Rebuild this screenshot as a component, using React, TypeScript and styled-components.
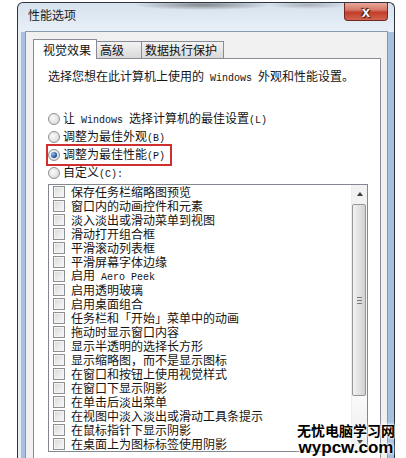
import React from 'react'
import styled, { createGlobalStyle } from 'styled-components'

const GlobalStyle = createGlobalStyle`
  html, body {
    margin: 0;
    padding: 0;
    background: #fff;
  }
  body {
    width: 406px;
    height: 458px;
    overflow: hidden;
    font-family: "Noto Sans CJK SC", "Liberation Sans", sans-serif;
    font-size: 12px;
    color: #141414;
  }
`

const Page = styled.div`
  position: relative;
  width: 406px;
  height: 458px;
  padding: 2px 11px 0 17px;
  box-sizing: border-box;
  overflow: hidden;
`

const Window = styled.div`
  border: 1px solid #2c3540;
  border-bottom: none;
  border-radius: 6px 6px 0 0;
  padding: 0 6px 0 7px;
  height: 470px;
  background:
    radial-gradient(ellipse 70px 5px at 185px 2px, rgba(60, 60, 60, 0.55), transparent),
    radial-gradient(ellipse 40px 4px at 290px 2px, rgba(80, 80, 80, 0.35), transparent),
    linear-gradient(180deg, #d6e2ee 0, #e8eff7 28px) 0 0 / 100% 29px no-repeat,
    linear-gradient(90deg, #e7eef5 0 3px, #a5c1df 3px 7px, #c9d9ea 7px calc(100% - 6px), #a5c1df calc(100% - 6px));
`

const TitleBar = styled.div`
  display: flex;
  align-items: flex-start;
  justify-content: space-between;
  height: 28px;
`

const Title = styled.div`
  margin: 5px 0 0 3px;
  line-height: 14px;
  color: #1b1b1b;
`

const CloseButton = styled.div`
  width: 44px;
  height: 18px;
  box-sizing: border-box;
  border: 1px solid #6e2a22;
  border-top: none;
  border-radius: 0 0 4px 4px;
  background: linear-gradient(180deg, #e8a698 0, #d67a69 40%, #c13e2c 55%, #d1634e 100%);
  display: flex;
  align-items: center;
  justify-content: center;
  color: #fff;
  font-family: "Liberation Sans", sans-serif;
  font-weight: bold;
  font-size: 15px;
  line-height: 1;
  text-shadow: 0 0 1px #4a140e, 1px 1px 1px #4a140e, -1px -1px 1px #4a140e;
`

const Client = styled.div`
  border: 1px solid #8799ae;
  border-bottom: none;
  background: #f0f0f0;
  padding: 6px 6px 6px 7px;
  height: 440px;
`

const TabStrip = styled.div`
  display: flex;
  align-items: flex-end;
  height: 20px;
`

const Tab = styled.div<{ $active?: boolean; $w: number }>`
  width: ${p => p.$w}px;
  height: ${p => (p.$active ? 20 : 17)}px;
  box-sizing: border-box;
  border: 1px solid #898c95;
  border-bottom: none;
  border-left-width: ${p => (p.$active ? 1 : 0)}px;
  background: ${p => (p.$active ? '#fff' : 'linear-gradient(180deg, #f3f3f3 0, #e6e6e6 50%, #d9d9d9 100%)')};
  margin-bottom: ${p => (p.$active ? -1 : 0)}px;
  position: relative;
  z-index: ${p => (p.$active ? 1 : 0)};
  display: flex;
  align-items: center;
  padding-left: ${p => (p.$active ? 9 : 3)}px;
  line-height: 14px;
  color: #111;
`

const Panel = styled.div`
  border: 1px solid #898c95;
  background: #fff;
  padding: 10px 12px 6px 14px;
  height: 420px;
`

const Description = styled.div`
  line-height: 14px;
  white-space: pre;
`

const RadioGroup = styled.div`
  margin-top: 24px;
  display: flex;
  flex-direction: column;
`

const RadioRow = styled.label`
  display: flex;
  align-items: center;
  height: 18px;
`

const Highlight = styled.span`
  display: inline-flex;
  align-items: center;
  height: 18px;
  padding-right: 5px;
  outline: 2px solid #cf2f2f;
  outline-offset: 0;
`

const Label = styled.span`
  white-space: pre;
  line-height: 14px;
`

const RadioCircle = styled.span<{ $checked?: boolean }>`
  width: 12px;
  height: 12px;
  box-sizing: border-box;
  border-radius: 50%;
  border: 1px solid #8e8f8f;
  background: radial-gradient(circle at 40% 40%, #fafafa 0, #e2e2e2 60%, #cfcfcf 100%);
  display: flex;
  align-items: center;
  justify-content: center;
  margin-right: 3px;
  flex: none;
  &::after {
    content: '';
    display: ${p => (p.$checked ? 'block' : 'none')};
    width: 6px;
    height: 6px;
    border-radius: 50%;
    background: radial-gradient(circle at 35% 35%, #9cc3f0 0, #2a5ea8 55%, #0f2f63 100%);
  }
`

const Half = styled.span`
  font-family: "Liberation Mono", monospace;
  font-size: 10px;
`

const ListBox = styled.div`
  margin-top: 2px;
  border: 1px solid #828790;
  display: flex;
  height: 266px;
`

const Items = styled.div`
  flex: 1;
  padding-left: 4px;
  display: flex;
  flex-direction: column;
`

const Item = styled.div`
  display: flex;
  align-items: center;
  height: 14px;
  gap: 6px;
  line-height: 14px;
`

const CheckBox = styled.span`
  width: 12px;
  height: 12px;
  box-sizing: border-box;
  border: 1px solid #8e8f8f;
  box-shadow: inset 0 0 0 1px #f4f4f4;
  background: linear-gradient(135deg, #d8d8d8 0, #ededed 60%, #f8f8f8 100%);
  flex: none;
`

const ScrollBar = styled.div`
  width: 16px;
  display: flex;
  flex-direction: column;
  background: #f2f2f2;
  border-left: 1px solid #ececec;
  box-sizing: border-box;
`

const ScrollButton = styled.div<{ $down?: boolean }>`
  height: 18px;
  display: flex;
  align-items: center;
  justify-content: center;
  &::after {
    content: '';
    width: 0;
    height: 0;
    border-left: 3px solid transparent;
    border-right: 3px solid transparent;
    border-${p => (p.$down ? 'top' : 'bottom')}: 4px solid #3a3a3a;
  }
`

const Thumb = styled.div`
  height: 192px;
  margin: 1px 1px 0 0;
  box-sizing: border-box;
  border: 1px solid #979797;
  border-radius: 2px;
  background: linear-gradient(90deg, #f2f2f2 0, #e2e2e2 50%, #d0d0d0 100%);
  display: flex;
  align-items: center;
  justify-content: center;
`

const Grip = styled.div`
  width: 5px;
  height: 7px;
  background: repeating-linear-gradient(180deg, #7b7b7b 0 1px, transparent 1px 3px);
`

const Track = styled.div`
  flex: 1;
  background: linear-gradient(180deg, #fafafa, #f0f0f0);
`

const Watermark = styled.div`
  position: absolute;
  right: 11px;
  bottom: 2px;
  display: flex;
  flex-direction: column;
  align-items: center;
  color: #000;
  text-shadow: 0 0 2px #fff, 0 0 3px #fff, 0 0 4px #fff;
`

const WatermarkCn = styled.div`
  font-family: "Noto Sans CJK SC", sans-serif;
  font-weight: bold;
  font-size: 14px;
  line-height: 17px;
`

const WatermarkEn = styled.div`
  font-family: "Liberation Sans", sans-serif;
  font-weight: bold;
  font-size: 17px;
  line-height: 17px;
`

const mixed = (text: string) =>
  text.split(/([\x20-\x7E]+)/).map((part, i) =>
    /^[\x20-\x7E]+$/.test(part) ? <Half key={i}>{part}</Half> : <React.Fragment key={i}>{part}</React.Fragment>
  )

const tabs = [
  { label: '视觉效果', w: 64, active: true },
  { label: '高级', w: 45 },
  { label: '数据执行保护', w: 82 },
]

const options = [
  { label: '让 Windows 选择计算机的最佳设置(L)' },
  { label: '调整为最佳外观(B)' },
  { label: '调整为最佳性能(P)', checked: true },
  { label: '自定义(C):' },
]

const effects = [
  '保存任务栏缩略图预览',
  '窗口内的动画控件和元素',
  '淡入淡出或滑动菜单到视图',
  '滑动打开组合框',
  '平滑滚动列表框',
  '平滑屏幕字体边缘',
  '启用 Aero Peek',
  '启用透明玻璃',
  '启用桌面组合',
  '任务栏和「开始」菜单中的动画',
  '拖动时显示窗口内容',
  '显示半透明的选择长方形',
  '显示缩略图，而不是显示图标',
  '在窗口和按钮上使用视觉样式',
  '在窗口下显示阴影',
  '在单击后淡出菜单',
  '在视图中淡入淡出或滑动工具条提示',
  '在鼠标指针下显示阴影',
  '在桌面上为图标标签使用阴影',
]

export default function App() {
  return (
    <Page>
      <GlobalStyle />
      <Window>
        <TitleBar>
          <Title>性能选项</Title>
          <CloseButton>x</CloseButton>
        </TitleBar>
        <Client>
          <TabStrip>
            {tabs.map(t => (
              <Tab key={t.label} $active={t.active} $w={t.w}>{t.label}</Tab>
            ))}
          </TabStrip>
          <Panel>
            <Description>{mixed('选择您想在此计算机上使用的 Windows 外观和性能设置。')}</Description>
            <RadioGroup>
              {options.map(o => (
                <RadioRow key={o.label}>
                  {o.checked ? (
                    <Highlight>
                      <RadioCircle $checked />
                      <Label>{mixed(o.label)}</Label>
                    </Highlight>
                  ) : (
                    <>
                      <RadioCircle />
                      <Label>{mixed(o.label)}</Label>
                    </>
                  )}
                </RadioRow>
              ))}
            </RadioGroup>
            <ListBox>
              <Items>
                {effects.map(e => (
                  <Item key={e}>
                    <CheckBox />
                    <Label>{mixed(e)}</Label>
                  </Item>
                ))}
              </Items>
              <ScrollBar>
                <ScrollButton />
                <Thumb>
                  <Grip />
                </Thumb>
                <Track />
                <ScrollButton $down />
              </ScrollBar>
            </ListBox>
          </Panel>
        </Client>
      </Window>
      <Watermark>
        <WatermarkCn>无忧电脑学习网</WatermarkCn>
        <WatermarkEn>wypcw.com</WatermarkEn>
      </Watermark>
    </Page>
  )
}
